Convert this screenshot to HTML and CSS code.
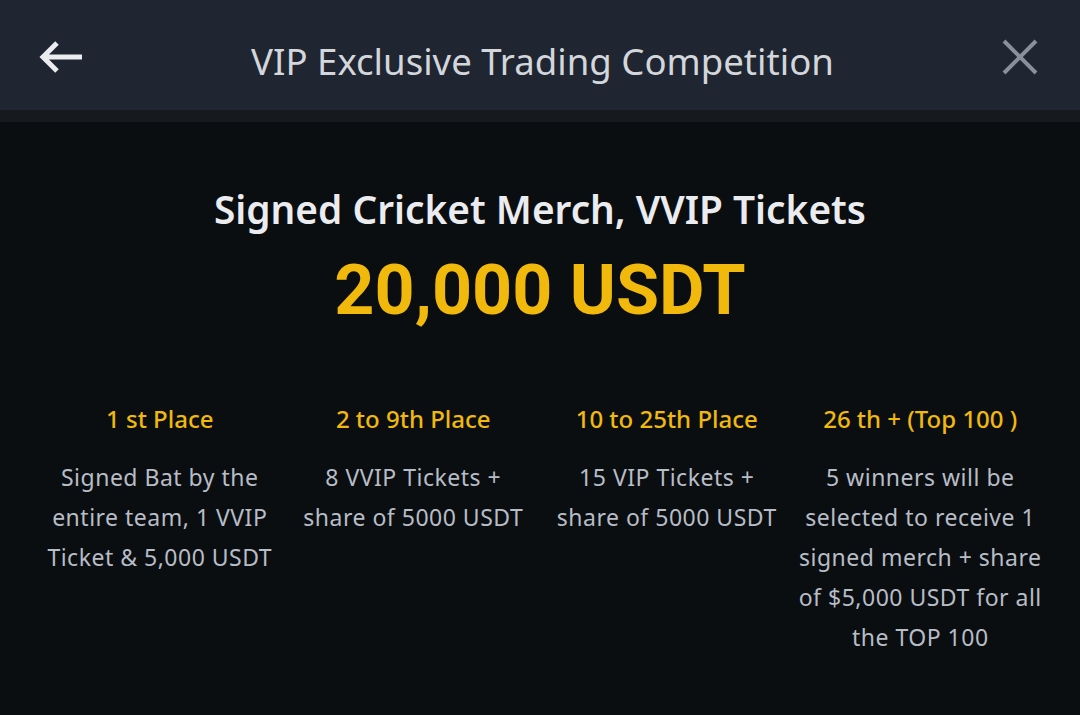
FILE: index.html
```html
<!DOCTYPE html>
<html>
<head>
<meta charset="utf-8">
<link rel="stylesheet" href="styles.css">
</head>
<body>
<header class="topbar">
  <button class="icon-btn back" aria-label="Back">
    <svg width="46" height="36" viewBox="0 0 46 36"><path d="M45 18H6M20 4L6 18l14 14" fill="none" stroke="#eaecef" stroke-width="5" stroke-linecap="butt" stroke-linejoin="miter"/></svg>
  </button>
  <h1 class="title">VIP Exclusive Trading Competition</h1>
  <button class="icon-btn close" aria-label="Close">
    <svg width="36" height="36" viewBox="0 0 36 36"><path d="M2 2L34 34M34 2L2 34" fill="none" stroke="#8a909a" stroke-width="4"/></svg>
  </button>
</header>
<div class="strip"></div>
<main class="content">
  <h2 class="headline">Signed Cricket Merch, VVIP Tickets</h2>
  <div class="amount">20,000 USDT</div>
  <section class="prizes">
    <div class="prize">
      <h3>1 st Place</h3>
      <p class="balanced">Signed Bat by the entire team, 1 VVIP Ticket &amp; 5,000 USDT</p>
    </div>
    <div class="prize">
      <h3>2 to 9th Place</h3>
      <p class="balanced">8 VVIP Tickets + share of 5000 USDT</p>
    </div>
    <div class="prize">
      <h3>10 to 25th Place</h3>
      <p class="balanced">15 VIP Tickets + share of 5000 USDT</p>
    </div>
    <div class="prize">
      <h3>26 th + (Top 100 )</h3>
      <p>5 winners will be selected to receive 1 signed merch + share of $5,000 USDT for all the TOP 100</p>
    </div>
  </section>
</main>
</body>
</html>
```
FILE: styles.css
```css
* { box-sizing: border-box; }
html, body { margin: 0; padding: 0; }
body {
  width: 1080px;
  height: 715px;
  overflow: hidden;
  background: #0b0e11;
  font-family: "Noto Sans", sans-serif;
  color: #eaecef;
}
.topbar {
  height: 110px;
  background: #1f2531;
  display: flex;
  align-items: center;
  justify-content: space-between;
  padding: 4px 42px 0 37px;
}
.icon-btn {
  background: none;
  border: 0;
  padding: 0;
  display: flex;
  align-items: center;
}
.title {
  margin: 0;
  padding-top: 8px;
  font-size: 36.6px;
  font-weight: 400;
  line-height: 50px;
  color: #d3d6db;
}
.strip {
  height: 12px;
  background: #16191e;
}
.content {
  display: flex;
  flex-direction: column;
  align-items: center;
  padding: 61px 33px 0;
}
.headline {
  margin: 0;
  font-size: 38.8px;
  font-weight: 600;
  line-height: 52px;
  color: #eaecef;
}
.amount {
  margin-top: 15px;
  font-family: "Roboto", "Noto Sans", sans-serif;
  font-size: 70px;
  font-weight: 700;
  line-height: 80px;
  color: #f0b90b;
}
.prizes {
  width: 100%;
  margin-top: 73px;
  display: grid;
  grid-template-columns: repeat(4, 1fr);
}
.prize {
  display: flex;
  flex-direction: column;
  align-items: center;
  text-align: center;
  padding: 0 2px;
}
.prize h3 {
  margin: 0;
  font-size: 24px;
  font-weight: 500;
  line-height: 32px;
  color: #f0b90b;
}
.prize p {
  margin: 22px 0 0;
  font-size: 23px;
  font-weight: 400;
  line-height: 40px;
  letter-spacing: 0.5px;
  color: #b7bdc6;
}
.prize p.balanced {
  text-wrap: balance;
}
```
